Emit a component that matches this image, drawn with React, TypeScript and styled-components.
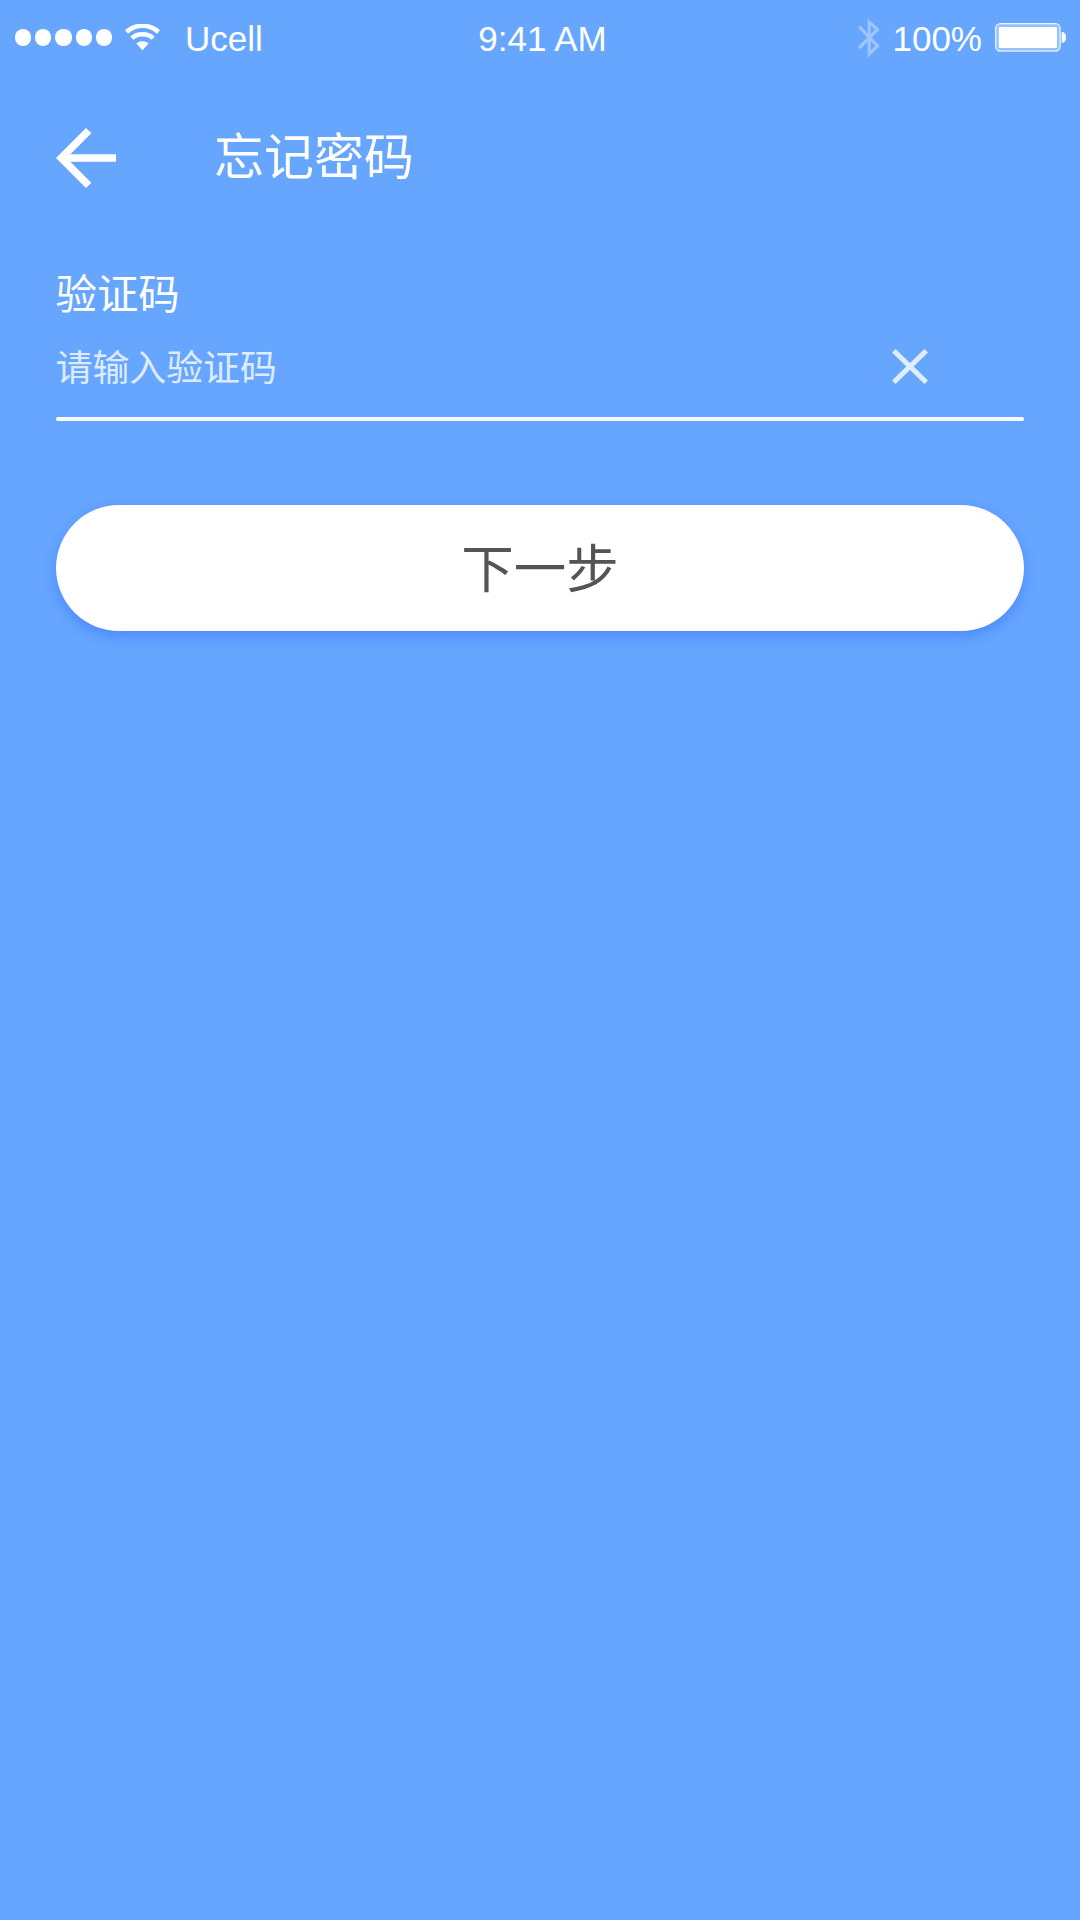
import React from "react";
import styled, { createGlobalStyle } from "styled-components";

const GlobalStyle = createGlobalStyle`
  * { box-sizing: border-box; }
  body { margin: 0; background: #66a6ff; }
`;

const Screen = styled.div`
  display: flex;
  flex-direction: column;
  width: 1080px;
  height: 1920px;
  background: #66a6ff;
  color: #fff;
  font-family: "Noto Sans CJK SC", "Liberation Sans", sans-serif;
`;

const StatusBar = styled.header`
  display: grid;
  grid-template-columns: 1fr auto 1fr;
  align-items: center;
  height: 75px;
  padding: 0 14px 0 15px;
`;

const StatusGroup = styled.div<{ $end?: boolean }>`
  display: flex;
  align-items: center;
  justify-content: ${(p) => (p.$end ? "flex-end" : "flex-start")};
`;

const StatusText = styled.span<{ $ml?: number; $mr?: number }>`
  padding-top: 3px;
  font-family: "Liberation Sans", Arial, sans-serif;
  font-size: 35px;
  line-height: 40px;
  margin-left: ${(p) => p.$ml ?? 0}px;
  margin-right: ${(p) => p.$mr ?? 0}px;
  white-space: pre;
`;

const Dots = styled.div`
  display: flex;
  gap: 4px;
  margin-right: 13px;
`;

const Dot = styled.span`
  width: 16.2px;
  height: 16.2px;
  border-radius: 50%;
  background: #fff;
`;

const NavBar = styled.nav`
  display: flex;
  align-items: center;
  height: 166px;
  padding: 0 56px;
`;

const IconButton = styled.button`
  display: flex;
  padding: 0;
  border: 0;
  background: none;
  color: inherit;
`;

const Title = styled.h1`
  margin: 0 0 0 98px;
  padding-bottom: 10px;
  font-size: 50px;
  font-weight: 400;
  line-height: 72px;
`;

const Form = styled.main`
  display: flex;
  flex-direction: column;
  padding: 20px 56px 0;
`;

const Label = styled.label`
  margin: 0 0 3px -0.5px;
  font-size: 41.4px;
  line-height: 60px;
`;

const Field = styled.div`
  display: flex;
  align-items: center;
  justify-content: space-between;
  height: 84px;
  padding-right: 96px;
  color: rgba(255, 255, 255, 0.8);
`;

const Placeholder = styled.span`
  margin-left: -0.5px;
  padding-bottom: 2px;
  font-size: 36.9px;
  line-height: 54px;
`;

const Underline = styled.div`
  height: 4.5px;
  margin-top: 8.5px;
  border-radius: 2.25px;
  background: #fff;
`;

const NextButton = styled.button`
  height: 126.5px;
  margin-top: 83.5px;
  padding: 0 0 5px;
  border: 0;
  border-radius: 63.25px;
  background: #fff;
  color: #545454;
  font-family: inherit;
  font-size: 52.5px;
  line-height: 76px;
  box-shadow: 0 5px 14px rgba(46, 104, 255, 0.48);
`;

const WifiIcon = () => (
  <svg width="35" height="27" viewBox="0 0 35 27" fill="none">
    <path d="M1.5 8C10.5 -.3 24.5 -.3 33.5 8" stroke="#fff" strokeWidth="4.6" />
    <path d="M6.8 14.2C12.8 9 22.2 9 28.2 14.2" stroke="#fff" strokeWidth="4.4" />
    <path d="M11.4 19.6C15 16.4 20 16.4 23.6 19.6L17.5 26.2Z" fill="#fff" />
  </svg>
);

const BluetoothIcon = () => (
  <svg width="22" height="40" viewBox="0 0 22 40" fill="none">
    <path
      d="M1 8.5L19.5 28L11.2 36V4L19.5 11.5L1 30"
      stroke="#fff"
      strokeOpacity=".36"
      strokeWidth="3.2"
    />
  </svg>
);

const BatteryIcon = () => (
  <svg width="71" height="29" viewBox="0 0 71 29">
    <rect x=".7" y=".7" width="64.4" height="27.4" rx="4.5" fill="#fff" fillOpacity=".3" stroke="#fff" strokeOpacity=".85" strokeWidth="1.3" />
    <rect x="3.8" y="4" width="58.2" height="21" rx="1" fill="#fff" />
    <path d="M66.6 9C69.6 9 71 11 71 14.4S69.6 19.8 66.6 19.8Z" fill="#fff" />
  </svg>
);

const BackIcon = () => (
  <svg width="60" height="60" viewBox="0 0 16 16" fill="currentColor">
    <path d="M16 7H3.83L9.42 1.41L8 0L0 8L8 16L9.41 14.59L3.83 9H16V7Z" />
  </svg>
);

const ClearIcon = () => (
  <svg width="36" height="35" viewBox="0 0 14 14" preserveAspectRatio="none" fill="#e0edff">
    <path d="M14 1.41L12.59 0L7 5.59L1.41 0L0 1.41L5.59 7L0 12.59L1.41 14L7 8.41L12.59 14L14 12.59L8.41 7Z" />
  </svg>
);

export default function App() {
  return (
    <Screen>
      <GlobalStyle />
      <StatusBar>
        <StatusGroup>
          <Dots>
            {[0, 1, 2, 3, 4].map((n) => (
              <Dot key={n} />
            ))}
          </Dots>
          <WifiIcon />
          <StatusText $ml={25}>Ucell</StatusText>
        </StatusGroup>
        <StatusText $ml={4}>9:41 AM</StatusText>
        <StatusGroup $end>
          <BluetoothIcon />
          <StatusText $ml={12} $mr={13}>100%</StatusText>
          <BatteryIcon />
        </StatusGroup>
      </StatusBar>
      <NavBar>
        <IconButton aria-label="返回">
          <BackIcon />
        </IconButton>
        <Title>忘记密码</Title>
      </NavBar>
      <Form>
        <Label>验证码</Label>
        <Field>
          <Placeholder>请输入验证码</Placeholder>
          <IconButton aria-label="清除">
            <ClearIcon />
          </IconButton>
        </Field>
        <Underline />
        <NextButton>下一步</NextButton>
      </Form>
    </Screen>
  );
}
